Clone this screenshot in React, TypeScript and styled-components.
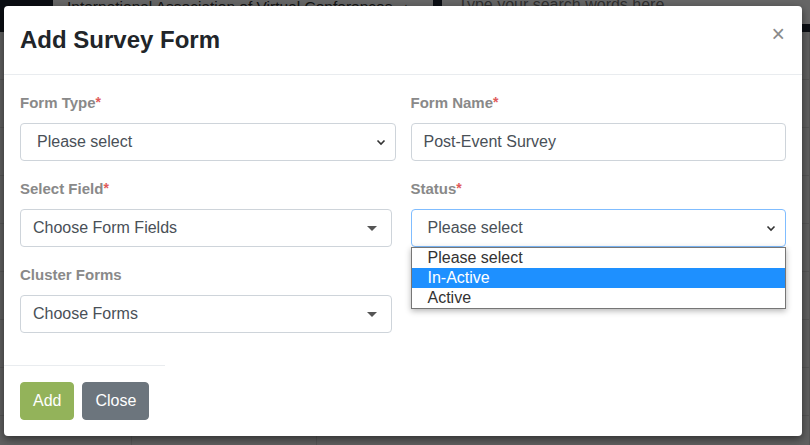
import React from "react";
import styled, { createGlobalStyle } from "styled-components";

const GlobalStyle = createGlobalStyle`
  html, body {
    margin: 0;
    padding: 0;
    width: 810px;
    height: 445px;
    overflow: hidden;
    font-family: "Liberation Sans", Arial, sans-serif;
  }
  * { box-sizing: border-box; }
`;

const Page = styled.div`
  position: relative;
  width: 810px;
  height: 445px;
  background: #efefef;
  overflow: hidden;
`;

const TopBar = styled.div`
  display: flex;
  align-items: flex-start;
  gap: 9px;
  height: 32px;
  padding-left: 53px;
  background: #1c2431;
  overflow: hidden;
`;

const SiteSelect = styled.div`
  display: flex;
  align-items: center;
  gap: 8px;
  width: 380px;
  height: 34px;
  margin-top: -10px;
  padding: 0 10px 0 14px;
  background: #fff;
  color: #333;
  font-size: 15.5px;
  white-space: nowrap;
  overflow: hidden;
`;

const Search = styled.div`
  flex: 1;
  height: 34px;
  margin-top: -10px;
  padding: 6px 16px;
  background: #fff;
  color: #777;
  font-size: 16px;
  white-space: nowrap;
`;

const TableRow = styled.div`
  display: grid;
  grid-template-columns: 132px 185px 1fr;
  height: 48px;
  border-bottom: 1px solid #d8d8d8;
  & > div { border-right: 1px solid #d8d8d8; }
`;

const Backdrop = styled.div`
  position: absolute;
  inset: 0;
  background: rgba(0, 0, 0, 0.6);
`;

const Modal = styled.div`
  position: absolute;
  left: 4px;
  top: 6px;
  width: 798px;
  background: #fff;
  border-radius: 4px;
  box-shadow: 0 3px 9px rgba(0, 0, 0, 0.5);
  color: #212529;
`;

const Header = styled.div`
  display: flex;
  justify-content: space-between;
  align-items: flex-start;
  padding: 16px;
  border-bottom: 1px solid #e9ecef;
`;

const Title = styled.h5`
  margin: 0;
  font-size: 24px;
  line-height: 36px;
  font-weight: 700;
  color: #212529;
`;

const CloseX = styled.button`
  border: 0;
  background: none;
  padding: 0 1px 0 0;
  margin-top: 1px;
  font-family: "Liberation Sans", Arial, sans-serif;
  font-size: 23px;
  line-height: 1;
  color: #8a8a8a;
  cursor: pointer;
`;

const Body = styled.div`
  display: grid;
  grid-template-columns: 1fr 1fr;
  column-gap: 15px;
  padding: 16px;
`;

const Group = styled.div`
  position: relative;
  margin-bottom: 16px;
`;

const Label = styled.label`
  display: block;
  margin-bottom: 9px;
  font-size: 15px;
  line-height: 23px;
  font-weight: 700;
  color: #898989;
`;

const Req = styled.span`
  color: #e05a5a;
  font-size: 14px;
  vertical-align: top;
`;

const Field = styled.div<{ $focused?: boolean; $pad?: number; $narrow?: boolean }>`
  display: flex;
  align-items: center;
  justify-content: space-between;
  height: 38px;
  width: ${(p) => (p.$narrow ? "calc(100% - 4px)" : "100%")};
  padding: 0 ${(p) => (p.$narrow ? 14 : 8)}px 0 ${(p) => p.$pad ?? 12}px;
  border: 1px solid ${(p) => (p.$focused ? "#80bdff" : "#ced4da")};
  border-radius: 4px;
  background: #fff;
  font-size: 16px;
  color: #495057;
`;

const Caret = styled.span`
  width: 0;
  height: 0;
  border-left: 5px solid transparent;
  border-right: 5px solid transparent;
  border-top: 5px solid #555;
`;

const Options = styled.ul`
  position: absolute;
  left: 0;
  right: 0;
  top: 100%;
  margin: 0;
  padding: 0;
  list-style: none;
  background: #fff;
  border: 1px solid #767676;
  box-shadow: 0 2px 6px rgba(0, 0, 0, 0.3);
  z-index: 2;
`;

const Option = styled.li<{ $active?: boolean }>`
  height: 20px;
  padding-left: 16px;
  font-size: 16px;
  line-height: 20px;
  color: ${(p) => (p.$active ? "#fff" : "#333")};
  background: ${(p) => (p.$active ? "#1e90ff" : "#fff")};
`;

const Footer = styled.div`
  position: relative;
  display: flex;
  gap: 8px;
  padding: 17px 16px 16px;
  &::before {
    content: "";
    position: absolute;
    left: 0;
    top: 0;
    width: 161px;
    border-top: 1px solid #e9ecef;
  }
`;

const Button = styled.button<{ $bg: string }>`
  height: 38px;
  padding: 0 12px;
  border: 1px solid ${(p) => p.$bg};
  border-radius: 4px;
  background: ${(p) => p.$bg};
  color: #fff;
  font-family: "Liberation Sans", Arial, sans-serif;
  font-size: 16px;
`;

const Chevron = () => (
  <svg width="12" height="12" viewBox="0 0 12 12">
    <path d="M2.5 4.5 L6 8 L9.5 4.5" fill="none" stroke="#333" strokeWidth="1.6" />
  </svg>
);

const RequiredLabel = ({ text, req }: { text: string; req?: boolean }) => (
  <Label>
    {text}
    {req && <Req>*</Req>}
  </Label>
);

export default function App() {
  const statusOptions = ["Please select", "In-Active", "Active"];

  return (
    <>
      <GlobalStyle />
      <Page>
        <TopBar>
          <SiteSelect>
            International Association of Virtual Conferences <span style={{ fontSize: 11 }}>▲</span>
          </SiteSelect>
          <Search>Type your search words here</Search>
        </TopBar>
        {[0, 1, 2, 3, 4, 5, 6, 7, 8].map((i) => (
          <TableRow key={i}>
            <div />
            <div />
            <div />
          </TableRow>
        ))}
        <Backdrop />
        <Modal>
          <Header>
            <Title>Add Survey Form</Title>
            <CloseX>×</CloseX>
          </Header>
          <Body>
            <Group>
              <RequiredLabel text="Form Type" req />
              <Field $pad={16}>
                Please select
                <Chevron />
              </Field>
            </Group>
            <Group>
              <RequiredLabel text="Form Name" req />
              <Field>Post-Event Survey</Field>
            </Group>
            <Group>
              <RequiredLabel text="Select Field" req />
              <Field $narrow>
                Choose Form Fields
                <Caret />
              </Field>
            </Group>
            <Group>
              <RequiredLabel text="Status" req />
              <div style={{ position: "relative" }}>
                <Field $pad={16} $focused>
                  Please select
                  <Chevron />
                </Field>
                <Options>
                  {statusOptions.map((o) => (
                    <Option key={o} $active={o === "In-Active"}>
                      {o}
                    </Option>
                  ))}
                </Options>
              </div>
            </Group>
            <Group>
              <RequiredLabel text="Cluster Forms" />
              <Field $narrow>
                Choose Forms
                <Caret />
              </Field>
            </Group>
          </Body>
          <Footer>
            <Button $bg="#93b35a">Add</Button>
            <Button $bg="#6c757d">Close</Button>
          </Footer>
        </Modal>
      </Page>
    </>
  );
}
